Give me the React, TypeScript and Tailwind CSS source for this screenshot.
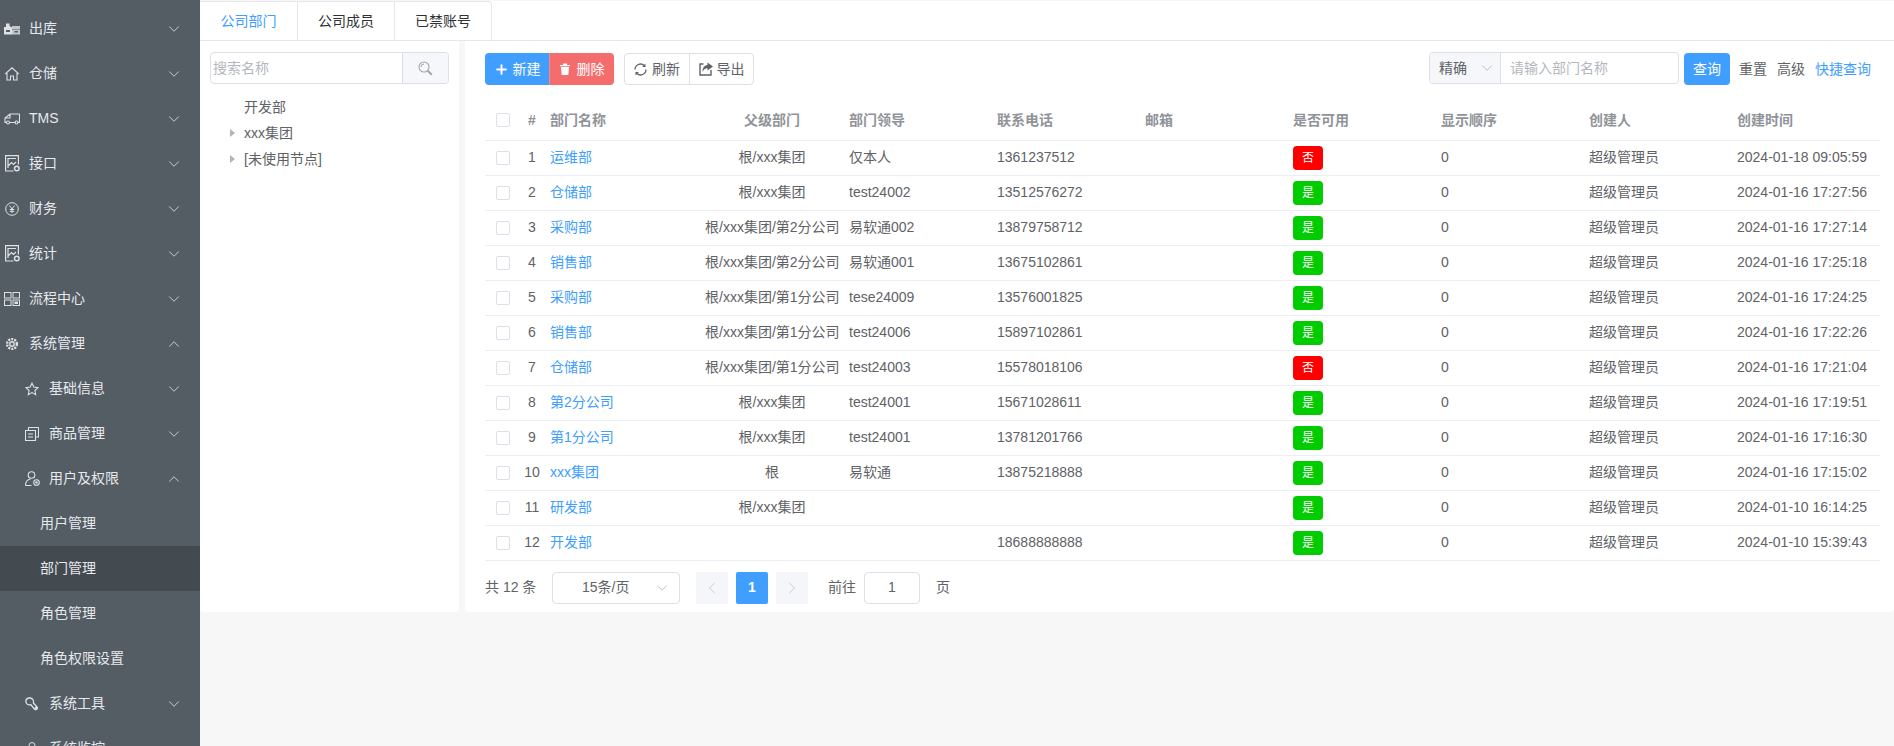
import React from 'react';
import { ChevronDown, ChevronUp, ChevronLeft, ChevronRight, Plus } from 'lucide-react';

type IconProps = { className?: string };

const IconOut = () => (
  <svg width="16" height="12" viewBox="0 0 16 12" fill="currentColor">
    <path d="M0 4h2V.5h3.500V3L8 4.500V11.500H0z" />
    <path d="M8 3h8v3H8zM8 6.500h8v5H8z" opacity=".8" />
    <path d="M2 7h4v2H2zM10.500 8H14v1.500h-3.500z" fill="#545c64" />
  </svg>
);
const IconHome = () => (
  <svg width="16" height="16" viewBox="0 0 16 16" fill="none" stroke="currentColor" strokeWidth="1.100">
    <path d="M1 8.200 8 1.800l7 6.400M3 7v7h3.500v-4h3v4H13V7" />
  </svg>
);
const IconTruck = () => (
  <svg width="16" height="12" viewBox="0 0 16 12" fill="none" stroke="currentColor" strokeWidth="1.100">
    <path d="M15.500 1H6L1 5v4.500h1.500M5.500 9.500h6M14 9.500h1.500V1M6 1v4H1" />
    <circle cx="4" cy="9.500" r="1.500" />
    <circle cx="12.500" cy="9.500" r="1.500" />
  </svg>
);
const IconReport = () => (
  <svg width="15" height="17" viewBox="0 0 15 17" fill="none" stroke="currentColor" strokeWidth="1.200">
    <path d="M8.500 16H.6V.6h12.800v9" />
    <path d="M3 13V3.500h8M3 11l3.500-3.500 2 2L11 7" />
    <circle cx="11.800" cy="13.500" r="2.300" strokeWidth="1.400" />
  </svg>
);
const IconYen = () => (
  <svg width="14" height="14" viewBox="0 0 14 14" fill="none" stroke="currentColor">
    <circle cx="7" cy="7" r="6.300" />
    <path d="M4.500 3.500 7 7l2.500-3.500M7 7v4M4.800 7.500h4.400M4.800 9.300h4.400" />
  </svg>
);
const IconGrid = () => (
  <svg width="16" height="14" viewBox="0 0 16 14" fill="none" stroke="currentColor">
    <rect x=".5" y=".5" width="6.500" height="5.500" />
    <rect x="9" y=".5" width="6.500" height="5.500" />
    <rect x=".5" y="8" width="6.500" height="5.500" />
    <rect x="9" y="8" width="6.500" height="5.500" />
    <rect x="11" y="10" width="2.500" height="1.500" fill="currentColor" />
  </svg>
);
const IconGear = () => (
  <svg width="14" height="14" viewBox="0 0 14 14" fill="none" stroke="currentColor" strokeWidth="1.400">
    <circle cx="7" cy="7" r="2.200" />
    <circle cx="7" cy="7" r="4.900" strokeDasharray="2 1.100" strokeWidth="2.400" />
  </svg>
);
const IconStar = () => (
  <svg width="14" height="14" viewBox="0 0 14 14" fill="none" stroke="currentColor" strokeWidth="1.100">
    <path d="m7 1.200 1.800 3.900 4.200.5-3.100 2.900.8 4.200L7 10.600l-3.700 2.100.8-4.200L1 5.600l4.200-.5z" />
  </svg>
);
const IconCopy = () => (
  <svg width="14" height="14" viewBox="0 0 14 14" fill="none" stroke="currentColor" strokeWidth="1.100">
    <path d="M3.500 3V.5h10V10H11" />
    <path d="M.5 3.500h10v10H.5zM3 7h5M3 10h5" />
  </svg>
);
const IconUser = () => (
  <svg width="15" height="15" viewBox="0 0 15 15" fill="none" stroke="currentColor" strokeWidth="1.100">
    <circle cx="6.500" cy="4" r="3.300" />
    <path d="M.5 14.500c0-3.500 2-6 5-6.500M6.500 14.500H.5" />
    <circle cx="11.500" cy="11.500" r="2.800" />
    <circle cx="11.500" cy="11.500" r=".8" />
  </svg>
);
const IconTool = () => (
  <svg width="14" height="14" viewBox="0 0 14 14" fill="none" stroke="currentColor" strokeWidth="1.300">
    <path d="M5.500 1H3.800C1.800 1.300.7 3 .9 4.800c.2 1.800 1.900 3.300 3.800 3.100l1-.3 3.900 4.600c1 1.100 3 0 2.800-1.500-.1-.4-.3-.7-.6-1L8.400 6C8.900 3.800 7.700 1.500 5.500 1z" />
    <circle cx="11" cy="11" r=".7" fill="currentColor" />
  </svg>
);
const IconLock = () => (
  <svg width="14" height="14" viewBox="0 0 14 14" fill="none" stroke="currentColor">
    <rect x="1.500" y="6" width="11" height="7.500" />
    <path d="M4 6V3.500a3 3 0 0 1 6 0V6" />
  </svg>
);
const IconSearch = ({ className }: IconProps) => (
  <svg className={className} width="15" height="15" viewBox="0 0 15 15" fill="none" stroke="currentColor">
    <circle cx="6" cy="6" r="5" strokeWidth="1.100" />
    <path d="M3 6a3 3 0 0 1 3-3" />
    <path d="m9.800 9.800 4 4" strokeWidth="2" />
  </svg>
);
const IconTrash = () => (
  <svg width="10" height="12" viewBox="0 0 10 12" fill="currentColor">
    <path d="M0 2h10v1.200H0zM3 .5h4V2H3zM1 4h8l-.7 8H1.700z" />
  </svg>
);
const IconRefresh = () => (
  <svg width="13" height="13" viewBox="0 0 13 13" fill="none" stroke="currentColor" strokeWidth="1.300">
    <path d="M1 6.500A5.500 5.500 0 0 1 10.200 2.500" />
    <path d="M12 6.500A5.500 5.500 0 0 1 2.800 10.500" />
    <path d="M11.500 .5v3.500H8" strokeWidth="0" fill="currentColor" />
    <path d="M1.500 12.500V9H5" strokeWidth="0" fill="currentColor" />
  </svg>
);
const IconExport = () => (
  <svg width="14" height="14" viewBox="0 0 14 14" fill="none" stroke="currentColor">
    <path d="M4.500 2H1v11h11V8" strokeWidth="1.400" />
    <path d="M8.500 .5 14 4.500 8.500 8.500V6.300C6 6.300 4.500 7.800 3.500 10c0-4 1.800-6.700 5-7z" fill="currentColor" stroke="none" />
  </svg>
);

type MenuItem = { label: string; icon?: React.ReactNode; level?: number; open?: boolean; active?: boolean; leaf?: boolean };

const menu: MenuItem[] = [
  { label: '出库', icon: <IconOut /> },
  { label: '仓储', icon: <IconHome /> },
  { label: 'TMS', icon: <IconTruck /> },
  { label: '接口', icon: <IconReport /> },
  { label: '财务', icon: <IconYen /> },
  { label: '统计', icon: <IconReport /> },
  { label: '流程中心', icon: <IconGrid /> },
  { label: '系统管理', icon: <IconGear />, open: true },
  { label: '基础信息', icon: <IconStar />, level: 1 },
  { label: '商品管理', icon: <IconCopy />, level: 1 },
  { label: '用户及权限', icon: <IconUser />, level: 1, open: true },
  { label: '用户管理', leaf: true },
  { label: '部门管理', leaf: true, active: true },
  { label: '角色管理', leaf: true },
  { label: '角色权限设置', leaf: true },
  { label: '系统工具', icon: <IconTool />, level: 1 },
  { label: '系统监控', icon: <IconLock />, level: 1 },
];

const rows = [
  ['运维部', '根/xxx集团', '仅本人', '1361237512', false, '2024-01-18 09:05:59'],
  ['仓储部', '根/xxx集团', 'test24002', '13512576272', true, '2024-01-16 17:27:56'],
  ['采购部', '根/xxx集团/第2分公司', '易软通002', '13879758712', true, '2024-01-16 17:27:14'],
  ['销售部', '根/xxx集团/第2分公司', '易软通001', '13675102861', true, '2024-01-16 17:25:18'],
  ['采购部', '根/xxx集团/第1分公司', 'tese24009', '13576001825', true, '2024-01-16 17:24:25'],
  ['销售部', '根/xxx集团/第1分公司', 'test24006', '15897102861', true, '2024-01-16 17:22:26'],
  ['仓储部', '根/xxx集团/第1分公司', 'test24003', '15578018106', false, '2024-01-16 17:21:04'],
  ['第2分公司', '根/xxx集团', 'test24001', '15671028611', true, '2024-01-16 17:19:51'],
  ['第1分公司', '根/xxx集团', 'test24001', '13781201766', true, '2024-01-16 17:16:30'],
  ['xxx集团', '根', '易软通', '13875218888', true, '2024-01-16 17:15:02'],
  ['研发部', '根/xxx集团', '', '', true, '2024-01-10 16:14:25'],
  ['开发部', '', '', '18688888888', true, '2024-01-10 15:39:43'],
] as const;

const Checkbox = () => <span className="block w-[14px] h-[14px] border border-[#dcdfe6] rounded-[2px] bg-white mx-auto" />;

const Sidebar = () => (
  <aside className="w-[200px] shrink-0 h-[746px] overflow-hidden bg-[#545c64] pt-[6px] text-[#e6e9ec]">
    {menu.map((item) => {
      const level = item.level ?? 0;
      return (
        <div
          key={item.label}
          className={`h-[45px] flex items-center ${item.active ? 'bg-[#434a50]' : ''} ${level === 1 ? 'pl-[24px]' : item.leaf ? 'pl-[40px]' : 'pl-[4px]'}`}
        >
          {item.icon && <span className="flex w-[16px] mr-[9px] justify-center text-[#dfe2e5]">{item.icon}</span>}
          <span className="text-[14px] whitespace-nowrap">{item.label}</span>
          {!item.leaf && (
            <span className="ml-auto mr-[17px] text-[#d5d8dc]">
              {item.open ? <ChevronUp size={18} strokeWidth={1.200} /> : <ChevronDown size={18} strokeWidth={1.200} />}
            </span>
          )}
        </div>
      );
    })}
  </aside>
);

const Tabs = () => (
  <div className="h-[40px] mt-px shrink-0 flex border-b border-[#e4e7ed] bg-white">
    <div className="flex border-t border-r border-[#e4e7ed] rounded-tr-[4px]">
      <div className="w-[98px] flex items-center justify-center text-[14px] text-[#409eff] border-r border-[#e4e7ed]">公司部门</div>
      <div className="w-[97px] flex items-center justify-center text-[14px] text-[#303133] border-r border-[#e4e7ed]">公司成员</div>
      <div className="w-[96px] flex items-center justify-center text-[14px] text-[#303133]">已禁账号</div>
    </div>
  </div>
);

const TreePanel = () => (
  <div className="w-[259px] shrink-0 bg-white rounded-b-[4px] px-[10px] pt-[11px]">
    <div className="h-[32px] flex border border-[#dcdfe6] rounded-[4px]">
      <div className="flex-1 flex items-center pl-[2px] text-[14px] text-[#b4b7bd]">搜索名称</div>
      <div className="w-[46px] flex items-center justify-center border-l border-[#dcdfe6] bg-[#f5f7fa] rounded-r-[4px] text-[#a0a4ab]">
        <IconSearch />
      </div>
    </div>
    <div className="mt-[10px] text-[14px] text-[#606266]">
      {[['开发部', false], ['xxx集团', true], ['[未使用节点]', true]].map(([name, arrow]) => (
        <div key={name as string} className="h-[26px] flex items-center pl-[20px]">
          <span className="w-[14px] flex">
            {arrow && <span className="w-0 h-0 border-y-[4px] border-y-transparent border-l-[5px] border-l-[#b0b4bb]" />}
          </span>
          {name}
        </div>
      ))}
    </div>
  </div>
);

const Toolbar = () => (
  <div className="h-[60px] flex items-start pt-[12px] text-[14px]">
    <div className="flex h-[32px] text-white">
      <button className="w-[64px] flex items-center justify-center gap-[4px] bg-[#409eff] rounded-l-[4px]">
        <Plus size={15} strokeWidth={3} />
        新建
      </button>
      <button className="w-[65px] flex items-center justify-center gap-[7px] bg-[#f56c6c] border-l border-[#f78989] rounded-r-[4px]">
        <IconTrash />
        删除
      </button>
    </div>
    <div className="flex h-[32px] ml-[10px] border border-[#dcdfe6] rounded-[4px] text-[#606266]">
      <button className="w-[64px] flex items-center justify-center gap-[5px]">
        <IconRefresh />
        刷新
      </button>
      <button className="w-[64px] flex items-center justify-center gap-[4px] border-l border-[#dcdfe6]">
        <IconExport />
        导出
      </button>
    </div>
    <div className="ml-auto flex items-center h-[32px] mr-[9px]">
      <div className="flex h-[32px] -mt-[2px] w-[250px] border border-[#dcdfe6] rounded-[4px]">
        <div className="w-[71px] flex items-center pl-[9px] gap-[11px] bg-[#f5f7fa] border-r border-[#dcdfe6] rounded-l-[4px] text-[#606266]">
          精确
          <ChevronDown size={18} strokeWidth={1} className="text-[#a8abb2]" />
        </div>
        <div className="flex-1 flex items-center pl-[9px] text-[#b4b7bd]">请输入部门名称</div>
      </div>
      <button className="ml-[5px] w-[46px] h-[32px] bg-[#409eff] text-white rounded-[4px]">查询</button>
      <span className="ml-[9px] text-[#606266]">重置</span>
      <span className="ml-[10px] text-[#606266]">高级</span>
      <span className="ml-[10px] text-[#409eff]">快捷查询</span>
    </div>
  </div>
);

const headers: [string, string][] = [
  ['部门名称', 'pl-[9px] text-left'],
  ['父级部门', 'text-center'],
  ['部门领导', 'pl-[10px] text-left'],
  ['联系电话', 'pl-[10px] text-left'],
  ['邮箱', 'pl-[10px] text-left'],
  ['是否可用', 'pl-[10px] text-left'],
  ['显示顺序', 'pl-[10px] text-left'],
  ['创建人', 'pl-[10px] text-left'],
  ['创建时间', 'pl-[10px] text-left'],
];

const DeptTable = () => (
  <table className="w-[1395px] table-fixed border-collapse text-[14px] text-[#606266]">
    <colgroup>
      <col className="w-[38px]" />
      <col className="w-[18px]" />
      <col className="w-[164px]" />
      <col className="w-[134px]" />
      <col className="w-[148px]" />
      <col className="w-[148px]" />
      <col className="w-[148px]" />
      <col className="w-[148px]" />
      <col className="w-[148px]" />
      <col className="w-[148px]" />
      <col className="w-[153px]" />
    </colgroup>
    <thead>
      <tr className="h-[39px] border-b border-[#ebeef5] text-[#909399]">
        <th className="font-normal pr-[2px]"><Checkbox /></th>
        <th className="font-bold text-center">#</th>
        {headers.map(([h, c]) => (
          <th key={h} className={`font-bold whitespace-nowrap ${c}`}>{h}</th>
        ))}
      </tr>
    </thead>
    <tbody>
      {rows.map((r, i) => (
        <tr key={i} className="h-[35px] border-b border-[#ebeef5]">
          <td className="pr-[2px]"><Checkbox /></td>
          <td className="text-center whitespace-nowrap">{i + 1}</td>
          <td className="pl-[9px] text-[#409eff]">{r[0]}</td>
          <td className="text-center whitespace-nowrap">{r[1]}</td>
          <td className="pl-[10px]">{r[2]}</td>
          <td className="pl-[10px]">{r[3]}</td>
          <td className="pl-[10px]"></td>
          <td className="pl-[10px]">
            <span className={`flex w-[30px] h-[24px] items-center justify-center rounded-[4px] text-[12px] text-white ${r[4] ? 'bg-[#00cc00]' : 'bg-[#ff0000]'}`}>
              {r[4] ? '是' : '否'}
            </span>
          </td>
          <td className="pl-[10px]">0</td>
          <td className="pl-[10px]">超级管理员</td>
          <td className="pl-[10px] whitespace-nowrap">{r[5]}</td>
        </tr>
      ))}
    </tbody>
  </table>
);

const Pager = () => (
  <div className="flex items-center h-[32px] mt-[11px] text-[14px] text-[#606266]">
    <span className="w-[67px]">共 12 条</span>
    <div className="w-[128px] h-[32px] flex items-center border border-[#dcdfe6] rounded-[4px] pl-[29px]">
      15条/页
      <ChevronDown size={18} strokeWidth={1} className="ml-auto mr-[8px] text-[#a8abb2]" />
    </div>
    <span className="ml-[16px] w-[32px] h-[32px] flex items-center justify-center bg-[#f4f6f9] rounded-[2px] text-[#c0c4cc]">
      <ChevronLeft size={20} strokeWidth={1} />
    </span>
    <span className="ml-[8px] w-[32px] h-[32px] flex items-center justify-center bg-[#409eff] rounded-[2px] text-white font-bold">1</span>
    <span className="ml-[8px] w-[32px] h-[32px] flex items-center justify-center bg-[#f4f6f9] rounded-[2px] text-[#c0c4cc]">
      <ChevronRight size={20} strokeWidth={1} />
    </span>
    <span className="ml-[20px]">前往</span>
    <span className="ml-[8px] w-[56px] h-[32px] flex items-center justify-center border border-[#dcdfe6] rounded-[4px]">1</span>
    <span className="ml-[16px]">页</span>
  </div>
);

export default function App() {
  return (
    <div className="flex h-[746px] overflow-hidden bg-[#f7f7f7] [font-family:'Liberation_Sans','Noto_Sans_CJK_SC',sans-serif]">
      <Sidebar />
      <main className="flex-1 min-w-0 flex flex-col">
        <Tabs />
        <div className="flex h-[571px] shrink-0">
          <TreePanel />
          <div className="flex-1 ml-[6px] bg-white rounded-b-[4px] pl-[20px] pr-[14px]">
            <Toolbar />
            <DeptTable />
            <Pager />
          </div>
        </div>
      </main>
    </div>
  );
}
